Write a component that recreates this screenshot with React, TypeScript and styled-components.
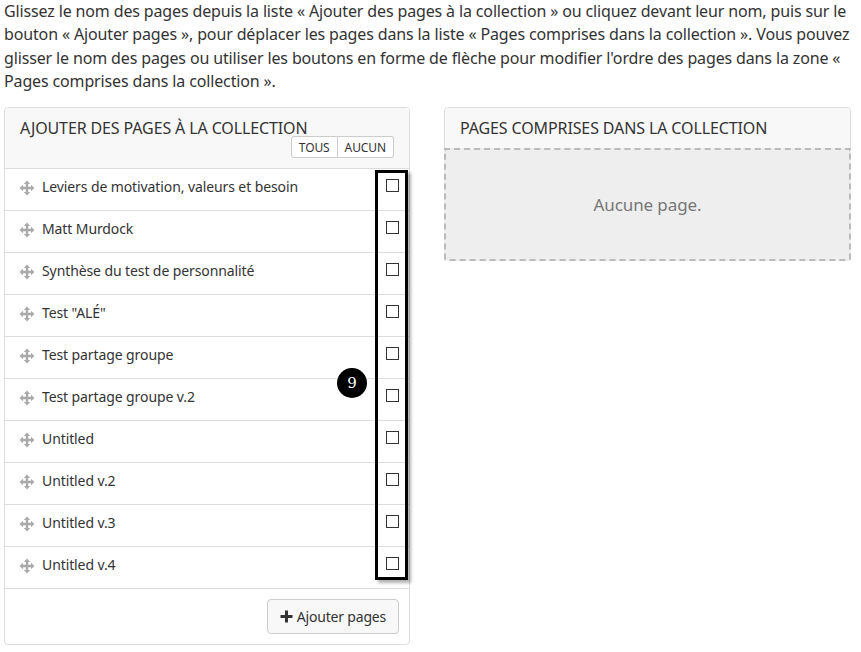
import React from 'react';
import styled, { createGlobalStyle } from 'styled-components';

const GlobalStyle = createGlobalStyle`
  html, body {
    margin: 0;
    padding: 0;
    background: #fff;
  }
  body {
    font-family: "Noto Sans", "Open Sans", sans-serif;
    color: #333;
  }
`

const Page = styled.div`
  width: 861px;
  height: 652px;
  overflow: hidden;
  box-sizing: border-box;
  padding: 0 10px 0 4px;
`

const Intro = styled.p`
  margin: 0;
  height: 107px;
  box-sizing: border-box;
  font-size: 16px;
  line-height: 23.4px;
  letter-spacing: -0.14px;
  white-space: nowrap;
  color: #333;
`

const Columns = styled.div`
  display: grid;
  grid-template-columns: 406px 407px;
  column-gap: 34px;
  align-items: start;
`

const Panel = styled.section`
  position: relative;
  box-sizing: border-box;
  border: 1px solid #ddd;
  border-radius: 4px;
  background: #fff;
`

const PanelHeader = styled.div<{ $tall?: boolean }>`
  box-sizing: border-box;
  height: ${({ $tall }) => ($tall ? '61px' : '41px')};
  padding: 10px 15px 0;
  background: #f8f8f8;
  border-radius: 3px 3px 0 0;
  border-bottom: 1px solid #ddd;
`

const PanelTitle = styled.h3`
  margin: 0;
  font-size: 16px;
  line-height: 20px;
  font-weight: 400;
  letter-spacing: -0.12px;
  text-transform: uppercase;
  white-space: nowrap;
  color: #333;
`

const ToggleGroup = styled.div`
  display: flex;
  justify-content: flex-end;
  margin-top: -2px;
`

const ToggleButton = styled.button<{ $last?: boolean }>`
  box-sizing: border-box;
  height: 22px;
  padding: 0 7px;
  font: 400 12px "Noto Sans", sans-serif;
  letter-spacing: -0.1px;
  color: #333;
  background: #fff;
  border: 1px solid #ccc;
  border-left-width: ${({ $last }) => ($last ? '0' : '1px')};
  border-radius: ${({ $last }) => ($last ? '0 3px 3px 0' : '3px 0 0 3px')};
`

const PageList = styled.ul`
  margin: 0;
  padding: 0;
  list-style: none;
`

const PageRow = styled.li`
  box-sizing: border-box;
  height: 42px;
  display: flex;
  align-items: center;
  padding: 0 10px 6px 14px;
  border-bottom: 1px solid #ddd;
  font-size: 14px;
  letter-spacing: -0.1px;
  color: #333;
`

const MoveIcon = styled.svg`
  width: 16px;
  height: 16px;
  margin-top: 2px;
  margin-right: 7px;
  flex: none;
`

const RowLabel = styled.span`
  flex: 1;
`

const CheckBox = styled.span`
  flex: none;
  box-sizing: border-box;
  width: 13px;
  height: 13px;
  margin-top: -3px;
  border: 1px solid #333;
  background: #fff;
`

const Callout = styled.div`
  position: absolute;
  left: 370px;
  top: 62px;
  width: 33px;
  height: 410px;
  box-sizing: border-box;
  border: 3px solid #000;
  box-shadow: 3px 3px 3px rgba(0, 0, 0, 0.3);
  pointer-events: none;
`

const CalloutBadge = styled.span`
  position: absolute;
  left: 332px;
  top: 260px;
  width: 30px;
  height: 30px;
  border-radius: 50%;
  background: #000;
  color: #fff;
  font: 400 15px/30px "DejaVu Serif", serif;
  text-align: center;
`

const PanelFooter = styled.div`
  display: flex;
  justify-content: flex-end;
  padding: 10px 10px 10px;
`

const AddButton = styled.button`
  box-sizing: border-box;
  height: 35px;
  display: flex;
  align-items: center;
  gap: 4px;
  padding: 0 12px;
  font: 400 14px "Noto Sans", sans-serif;
  letter-spacing: -0.2px;
  color: #333;
  background: #f8f8f8;
  border: 1px solid #ccc;
  border-radius: 4px;
`

const EmptyZone = styled.div`
  box-sizing: border-box;
  height: 113px;
  display: flex;
  align-items: center;
  justify-content: center;
  background: #eee;
  border: 2px dashed #bbb;
  border-radius: 0 0 3px 3px;
  margin: -1px -1px -1px;
  font-size: 17px;
  letter-spacing: -0.1px;
  color: #777;
`

const pages = [
  'Leviers de motivation, valeurs et besoin',
  'Matt Murdock',
  'Synthèse du test de personnalité',
  'Test "ALÉ"',
  'Test partage groupe',
  'Test partage groupe v.2',
  'Untitled',
  'Untitled v.2',
  'Untitled v.3',
  'Untitled v.4',
]

const Move = () => (
  <MoveIcon viewBox="0 0 16 16" fill="#aaa">
    <path d="M8 0.5 11.2 4H9.2V6.8H12V4.8L15.5 8 12 11.2V9.2H9.2V12H11.2L8 15.5 4.8 12H6.8V9.2H4V11.2L0.5 8 4 4.8V6.8H6.8V4H4.8Z" />
  </MoveIcon>
)

const App: React.FC = () => {
  return (
    <Page>
      <GlobalStyle />
      <Intro>
        Glissez le nom des pages depuis la liste « Ajouter des pages à la collection » ou cliquez devant leur nom, puis sur le<br />
        bouton « Ajouter pages », pour déplacer les pages dans la liste « Pages comprises dans la collection ». Vous pouvez<br />
        glisser le nom des pages ou utiliser les boutons en forme de flèche pour modifier l'ordre des pages dans la zone «<br />
        Pages comprises dans la collection ».
      </Intro>
      <Columns>
        <Panel>
          <PanelHeader $tall>
            <PanelTitle>Ajouter des pages à la collection</PanelTitle>
            <ToggleGroup>
              <ToggleButton>TOUS</ToggleButton>
              <ToggleButton $last>AUCUN</ToggleButton>
            </ToggleGroup>
          </PanelHeader>
          <PageList>
            {pages.map((name) => (
              <PageRow key={name}>
                <Move />
                <RowLabel>{name}</RowLabel>
                <CheckBox />
              </PageRow>
            ))}
          </PageList>
          <PanelFooter>
            <AddButton>
              <svg width="13" height="13" viewBox="0 0 13 13" fill="#333">
                <path d="M5 0.5H8V5H12.5V8H8V12.5H5V8H0.5V5H5Z" />
              </svg>
              Ajouter pages
            </AddButton>
          </PanelFooter>
          <Callout />
          <CalloutBadge>9</CalloutBadge>
        </Panel>
        <Panel>
          <PanelHeader>
            <PanelTitle>Pages comprises dans la collection</PanelTitle>
          </PanelHeader>
          <EmptyZone>Aucune page.</EmptyZone>
        </Panel>
      </Columns>
    </Page>
  )
}

export default App
